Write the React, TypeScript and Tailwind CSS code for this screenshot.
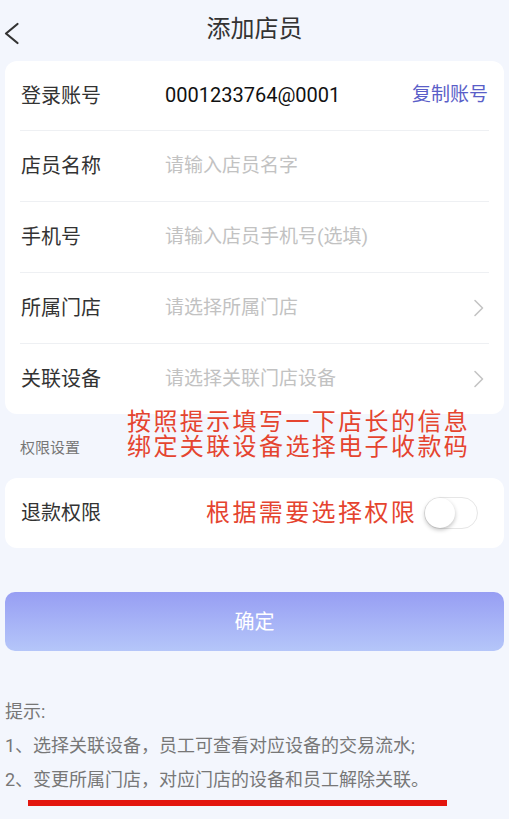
import React from "react";

const font = { fontFamily: '"Roboto", "Noto Sans CJK SC", sans-serif' };

function Chevron() {
  return (
    <svg width="12" height="18" viewBox="0 0 12 18" fill="none">
      <path d="M2 1.5 L9.5 9 L2 16.5" stroke="#c4c4c4" strokeWidth="1.6" strokeLinecap="round" strokeLinejoin="round" />
    </svg>
  );
}

function Row({ label, children, right, first, last }: { label: string; children?: React.ReactNode; right?: React.ReactNode; first?: boolean; last?: boolean }) {
  return (
    <div className={"flex items-center mx-[15px] " + (first ? "h-[70px] " : last ? "h-[70px] " : "h-[71px] ") + (last ? "" : "border-b border-[#eef0f3]")}>
      <div className="w-[145px] pl-[1px] text-[20px] text-[#333333]">{label}</div>
      <div className="flex-1 text-[19px]">{children}</div>
      {right}
    </div>
  );
}

export default function App() {
  return (
    <div className="relative w-[509px] h-[819px] bg-[#f3f6fd] overflow-hidden" style={font}>
      {/* header */}
      <div className="relative flex h-[61px] items-center justify-center pb-[3px]">
        <div className="absolute left-[3px] top-[22px]">
          <svg width="17" height="23" viewBox="0 0 17 23" fill="none">
            <path d="M14.5 2 L3 11.5 L14.5 21" stroke="#333333" strokeWidth="2.2" strokeLinecap="round" strokeLinejoin="round" />
          </svg>
        </div>
        <div className="text-[24px] text-[#333333]">添加店员</div>
      </div>

      {/* card 1 */}
      <div className="mx-[5px] rounded-[12px] bg-white">
        <Row first label="登录账号" right={<div className="pr-[1px] text-[19px] text-[#5a5ec8]">复制账号</div>}>
          <span className="text-[20px] text-[#111111]">0001233764@0001</span>
        </Row>
        <Row label="店员名称">
          <span className="text-[#c2c2c2]">请输入店员名字</span>
        </Row>
        <Row label="手机号">
          <span className="text-[#c2c2c2]">请输入店员手机号(选填)</span>
        </Row>
        <Row label="所属门店" right={<div className="pr-[4px]"><Chevron /></div>}>
          <span className="text-[#c2c2c2]">请选择所属门店</span>
        </Row>
        <Row label="关联设备" right={<div className="pr-[4px]"><Chevron /></div>} last>
          <span className="text-[#c2c2c2]">请选择关联门店设备</span>
        </Row>
      </div>

      {/* section label */}
      <div className="pl-[20px] pt-[24px] pb-[20px] text-[15px] leading-[20px] text-[#777777]">权限设置</div>

      {/* card 2 */}
      <div className="mx-[5px] flex h-[70px] items-center rounded-[12px] bg-white px-[15px]">
        <div className="pl-[1px] text-[20px] text-[#333333]">退款权限</div>
        <div className="flex-1" />
        <div className="relative mr-[11px] h-[32px] w-[54px] rounded-full border border-[#e6e6e6] bg-white">
          <div className="absolute left-[0px] top-[0px] h-[30px] w-[30px] rounded-full bg-white shadow-[0_2px_4px_rgba(0,0,0,0.25)]" />
        </div>
      </div>

      {/* button */}
      <div className="mx-[5px] mt-[44px] flex h-[59px] items-center justify-center rounded-[10px] bg-gradient-to-b from-[#979ef3] to-[#b5c6f9]">
        <span className="text-[20px] text-white">确定</span>
      </div>

      {/* hints */}
      <div className="mt-[44px] pl-[5px] text-[18px] leading-[34px] text-[#777777]">
        <div>提示:</div>
        <div>1、选择关联设备，员工可查看对应设备的交易流水;</div>
        <div>2、变更所属门店，对应门店的设备和员工解除关联。</div>
      </div>

      {/* annotations */}
      <div className="absolute left-[127px] top-[410px] text-[24px] leading-[25px] tracking-[2.4px] text-[#e5442f]">
        <div>按照提示填写一下店长的信息</div>
        <div>绑定关联设备选择电子收款码</div>
      </div>
      <div className="absolute left-[206px] top-[498px] text-[24px] leading-[30px] tracking-[2.4px] text-[#e5442f]">根据需要选择权限</div>
      <div className="absolute left-[28px] top-[800px] h-[6px] w-[419px] bg-[#e3160f]" />
    </div>
  );
}
